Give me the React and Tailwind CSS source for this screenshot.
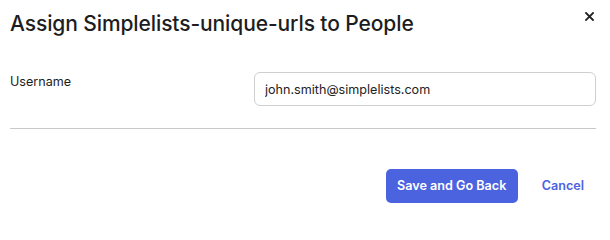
import React from "react";

export default function App() {
  return (
    <div
      className="w-[610px] h-[218px] bg-white pl-[10px] pr-[14px] text-[#1d1d21]"
      style={{ fontFamily: "Inter, 'Noto Sans', sans-serif" }}
    >
      {/* cabecera */}
      <div className="flex items-start justify-between pt-[12px]">
        <h2 className="text-[21px] leading-[24px] font-medium tracking-[-0.1px]">
          Assign Simplelists-unique-urls to People
        </h2>
        <button className="mr-[2px] p-0 text-[#222]" aria-label="Close">
          <svg width="9" height="9" viewBox="0 0 9 9">
            <path d="M1 1L8 8M8 1L1 8" stroke="currentColor" strokeWidth="1.8" strokeLinecap="square" />
          </svg>
        </button>
      </div>

      {/* campo */}
      <div className="flex items-start mt-[36px]">
        <label className="w-[244px] text-[12.6px] leading-[16px] mt-[2px]">Username</label>
        <input
          className="flex-1 h-[34px] border border-[#cfcfcf] rounded-[6px] px-[10px] text-[12.6px] text-[#222] outline-none"
          defaultValue="john.smith@simplelists.com"
        />
      </div>

      <div className="border-t border-[#c8c8c8] mt-[22px]" />

      {/* acciones */}
      <div className="flex items-center justify-end mt-[40px] pr-[12px]">
        <button className="h-[34px] w-[132px] rounded-[5px] bg-[#4c63e0] text-white text-[12.6px] font-semibold">
          Save and Go Back
        </button>
        <button className="ml-[24px] text-[12.6px] font-semibold text-[#4c63e0]">Cancel</button>
      </div>
    </div>
  );
}
